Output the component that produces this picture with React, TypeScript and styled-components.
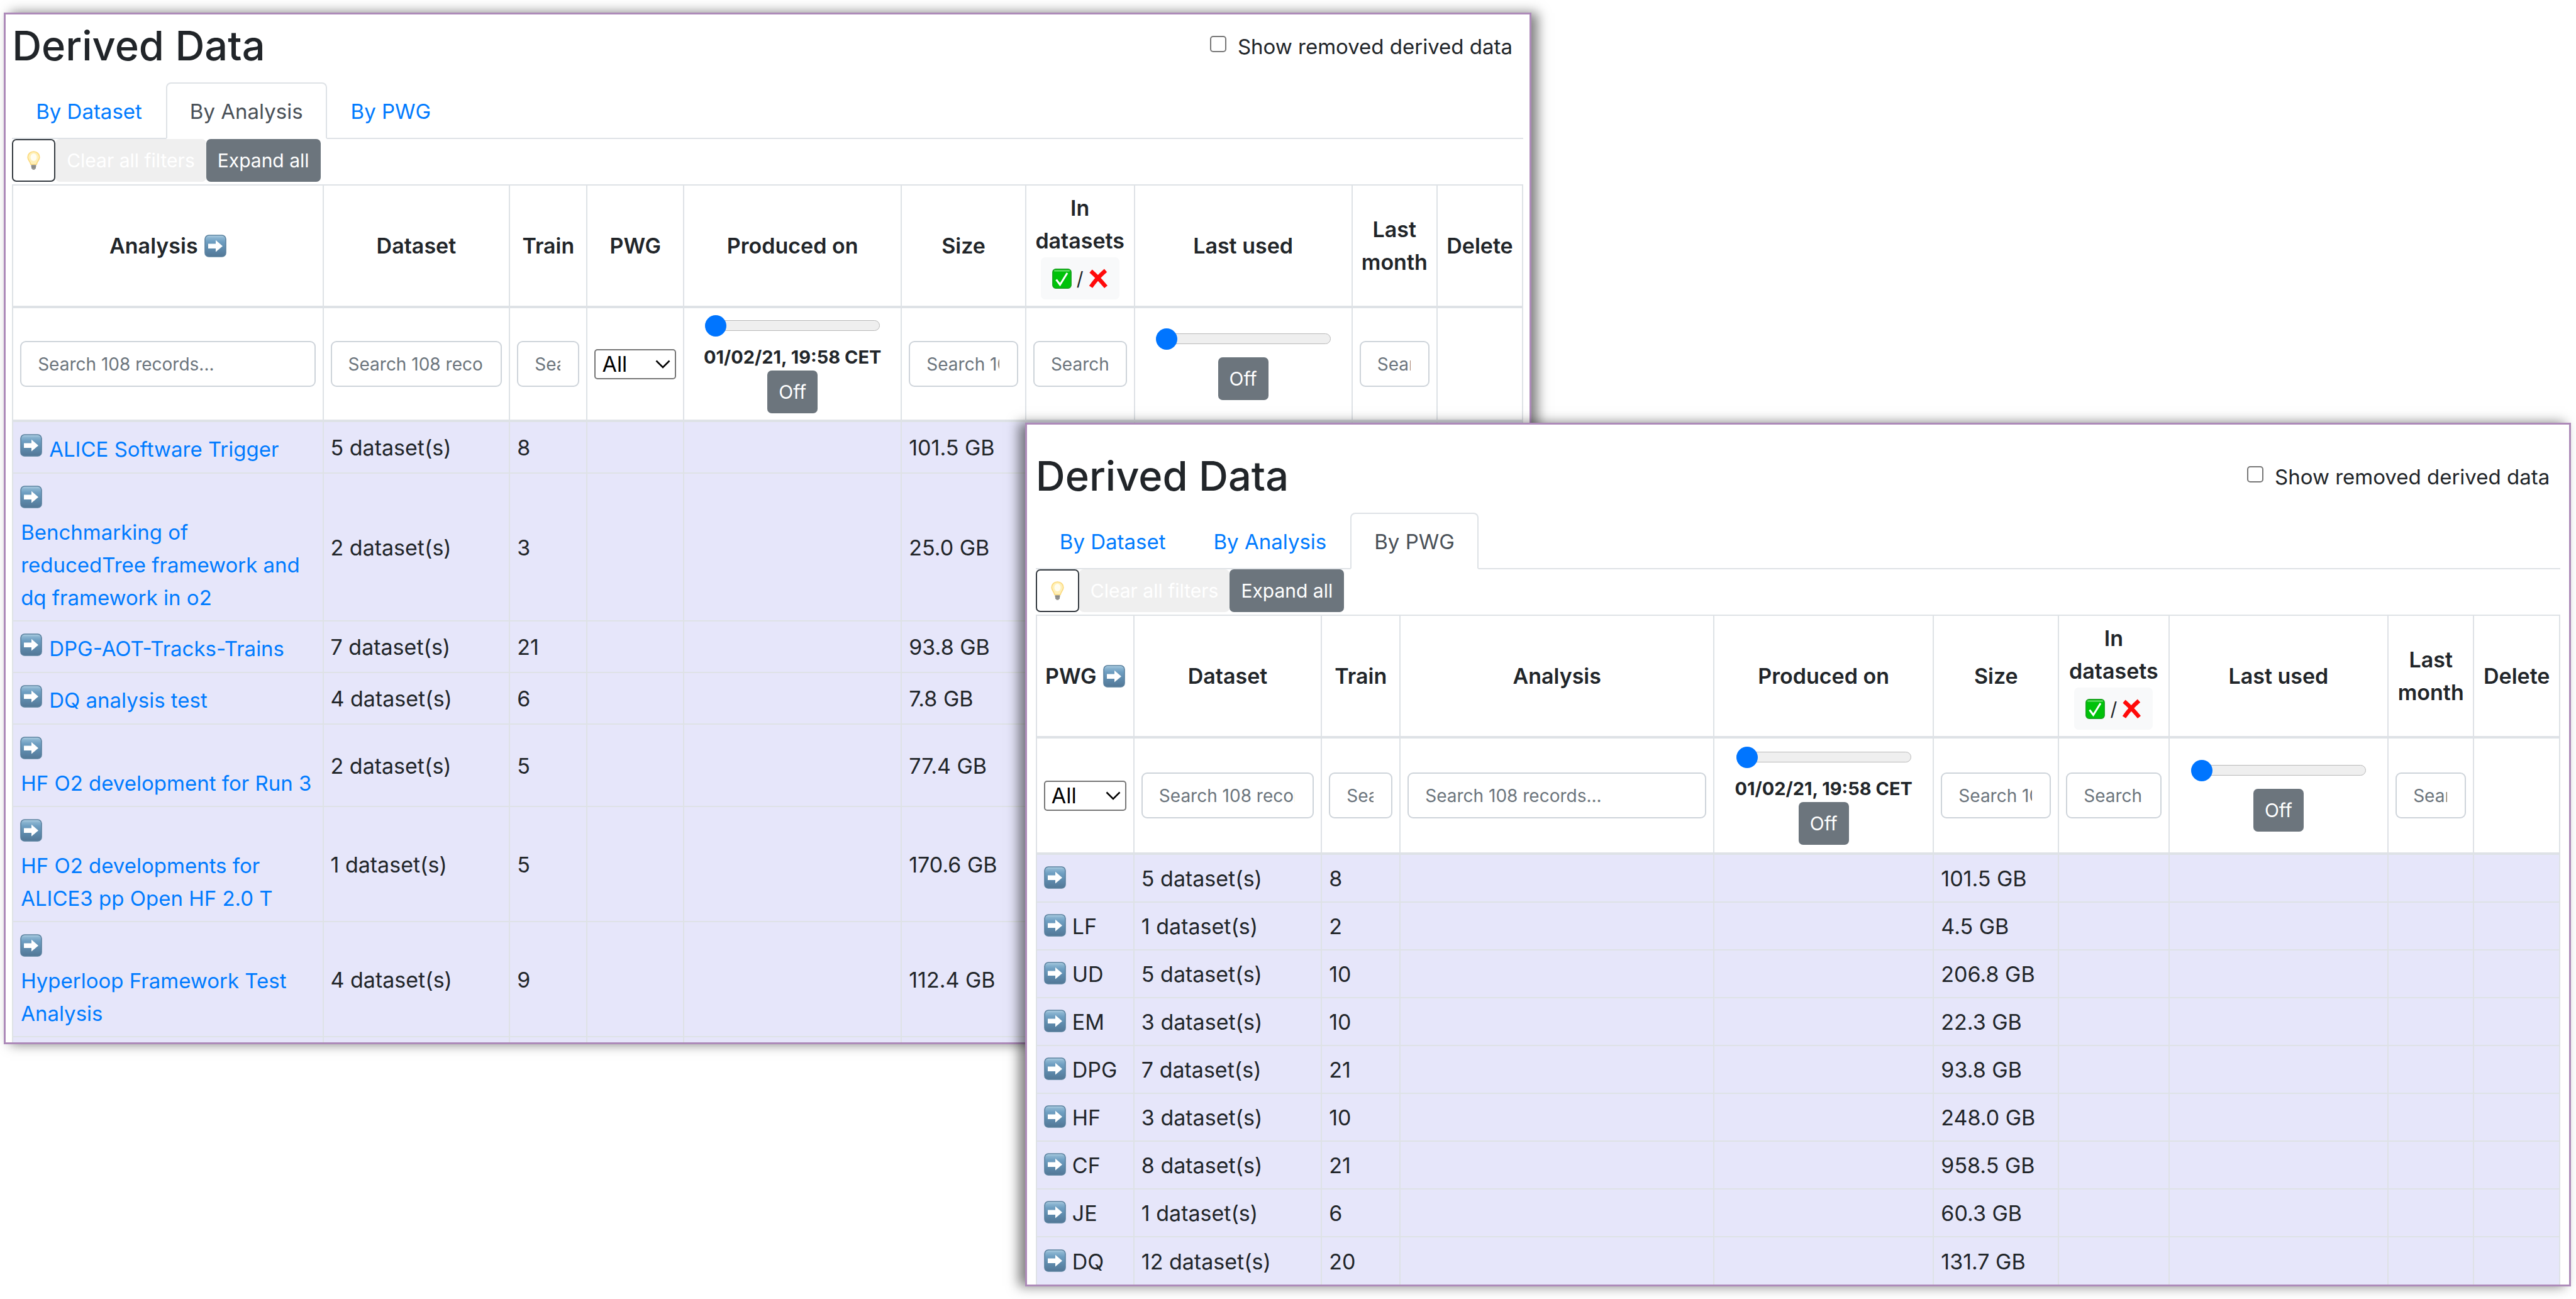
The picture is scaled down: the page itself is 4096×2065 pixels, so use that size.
import React, { useId } from "react";
import styled, { createGlobalStyle } from "styled-components";

const GlobalStyle = createGlobalStyle`
  *, *::before, *::after { box-sizing: border-box; }
  body {
    margin: 0;
    background: #ffffff;
    color: #212529;
    font-family: Inter, "Liberation Sans", sans-serif;
    font-size: 33px;
    line-height: 52px;
  }
  button, input, select { font-family: inherit; margin: 0; }
`;

const Desktop = styled.main`
  position: relative;
  min-height: 100vh;
  overflow: hidden;
`;

const Window = styled.section<{ $left: string; $top: string; $width: string; $inset: number; $head: number; $shade: number }>`
  position: absolute;
  left: ${(p) => p.$left};
  top: ${(p) => p.$top};
  width: ${(p) => p.$width};
  padding: ${(p) => p.$head}px ${(p) => p.$inset}px 0;
  border: 3px solid #ad8ab9;
  background: #ffffff;
  box-shadow: ${(p) => p.$shade}px 0 18px rgba(0, 0, 0, 0.5);
`;

const TitleBar = styled.header`
  display: flex;
  align-items: center;
  justify-content: space-between;
  margin-bottom: 16px;
  padding-right: 17px;
`;

const Title = styled.h2`
  margin: 0;
  font-size: 65px;
  line-height: 84px;
  font-weight: 500;
`;

const CheckLabel = styled.label`
  display: flex;
  align-items: center;
  gap: 18px;
  padding-top: 2px;
`;

const Checkbox = styled.input`
  appearance: none;
  width: 26px;
  height: 26px;
  margin-bottom: 8px;
  border: 2px solid #767676;
  border-radius: 5px;
  background: #ffffff;
`;

const Tabs = styled.nav`
  display: flex;
  border-bottom: 2px solid #dee2e6;
`;

const Tab = styled.a<{ $active: boolean }>`
  padding: 18px 36px 16px;
  margin-bottom: -2px;
  border: 2px solid ${(p) => (p.$active ? "#dee2e6" : "transparent")};
  border-bottom-color: ${(p) => (p.$active ? "#ffffff" : "transparent")};
  border-radius: 8px 8px 0 0;
  background: ${(p) => (p.$active ? "#ffffff" : "transparent")};
  color: ${(p) => (p.$active ? "#495057" : "#007bff")};
  text-decoration: none;
`;

const Toolbar = styled.div`
  display: flex;
  margin-bottom: 4px;
`;

const Button = styled.button<{ $kind: "outline" | "muted" | "solid" | "light" }>`
  height: ${(p) => (p.$kind === "light" ? 67 : 68)}px;
  padding: 0 ${(p) => (p.$kind === "outline" ? 22 : 16)}px;
  border: 2px solid ${(p) => ({ outline: "#343a40", muted: "#efefef", solid: "#6c757d", light: "#f8f9fa" })[p.$kind]};
  border-radius: 7px;
  background: ${(p) => ({ outline: "#ffffff", muted: "#efefef", solid: "#6c757d", light: "#f8f9fa" })[p.$kind]};
  color: ${(p) => (p.$kind === "light" ? "#212529" : "#ffffff")};
  font-size: 30px;
  line-height: 44px;
  display: inline-flex;
  align-items: center;
  justify-content: center;
  gap: 8px;
`;

const Table = styled.table`
  width: 100%;
  table-layout: fixed;
  border-collapse: collapse;
`;

const Col = styled.col<{ $share: number }>`
  width: ${(p) => p.$share}%;
`;

const HeadCell = styled.th`
  padding: 10px 8px;
  border: 2px solid #dee2e6;
  border-bottom-width: 4px;
  font-size: 34px;
  font-weight: 600;
  text-align: center;
  vertical-align: middle;
`;

const HeadLabel = styled.span`
  display: inline-flex;
  align-items: center;
  gap: 10px;
`;

const FilterRow = styled.tr<{ $height: number }>`
  height: ${(p) => p.$height}px;
`;

const FilterCell = styled.td`
  padding: 0 11px;
  border: 2px solid #dee2e6;
  border-bottom-width: 4px;
  vertical-align: middle;
`;

const SearchBox = styled.input`
  display: block;
  width: 100%;
  height: 73px;
  padding: 0 28px 0 26px;
  border: 2px solid #ced4da;
  border-radius: 9px;
  background: #ffffff;
  font-size: 28px;
  &::placeholder { color: #6c757d; opacity: 1; }
`;

const SelectWrap = styled.div`
  position: relative;
  svg {
    position: absolute;
    right: 9px;
    top: 17px;
    pointer-events: none;
  }
`;

const Select = styled.select`
  appearance: none;
  display: block;
  width: 100%;
  height: 48px;
  padding: 0 10px;
  border: 2px solid #767676;
  border-radius: 5px;
  background: #ffffff;
  color: #000000;
  font-size: 34px;
  line-height: 44px;
`;

const DateFilter = styled.div`
  display: flex;
  flex-direction: column;
  align-items: center;
`;

const Range = styled.input`
  appearance: none;
  width: 278px;
  height: 34px;
  margin-bottom: 12px;
  background: transparent;
  &::-webkit-slider-runnable-track {
    height: 17px;
    border: 1px solid #b9b9b9;
    border-radius: 9px;
    background: #efefef;
  }
  &::-webkit-slider-thumb {
    appearance: none;
    width: 34px;
    height: 34px;
    margin: -9px 0 0 -1px;
    border-radius: 50%;
    background: #0075ff;
  }
`;

const DateText = styled.output`
  font-size: 29px;
  line-height: 42px;
  font-weight: 700;
  white-space: nowrap;
`;

const Cell = styled.td<{ $last: boolean }>`
  height: 76px;
  padding: 12px 11px 10px;
  border: 2px solid #dee2e6;
  border-bottom-width: ${(p) => (p.$last ? 0 : 2)}px;
  background: #e6e6fa;
  font-size: 34px;
`;

const NameLine = styled.div`
  display: flex;
  align-items: center;
  gap: 10px;
  height: 52px;
  svg { margin-bottom: 4px; }
`;

const LinkLine = styled.div<{ $wrapped: boolean }>`
  display: flex;
  flex-direction: ${(p) => (p.$wrapped ? "column" : "row")};
  align-items: flex-start;
  gap: ${(p) => (p.$wrapped ? 12 : 10)}px;
  padding: ${(p) => (p.$wrapped ? "7px 0 0" : "5px 0 1px")};
  svg { margin-top: ${(p) => (p.$wrapped ? 0 : 2)}px; }
`;

const AnalysisLink = styled.a`
  padding-left: 1px;
  color: #007bff;
  font-size: 33px;
  text-decoration: none;
`;

const ClippedCell = styled.td`
  height: 9px;
  padding: 0;
  border: 2px solid #dee2e6;
  border-bottom: 0;
  background: #e6e6fa;
`;

function ArrowIcon() {
  const id = useId();
  return (
    <svg width="35" height="36" viewBox="0 0 35 36" aria-hidden="true">
      <defs>
        <linearGradient id={id} x1="0" y1="0" x2="0" y2="1">
          <stop offset="0" stopColor="#b4d3e6" />
          <stop offset="0.12" stopColor="#8ab4d0" />
          <stop offset="0.3" stopColor="#6f9fc2" />
          <stop offset="0.6" stopColor="#5f8cae" />
          <stop offset="1" stopColor="#527796" />
        </linearGradient>
      </defs>
      <rect x="1" y="1" width="33" height="34" rx="6" fill={`url(#${id})`} stroke="#5a819f" strokeWidth="1.6" />
      <path d="M6 14.5h12V8.8L29 18.2 18 27.6v-5.7H6z" fill="#ffffff" />
    </svg>
  );
}

function BulbIcon() {
  return (
    <svg width="21" height="31" viewBox="0 0 21 31" aria-hidden="true">
      <path d="M10.5 1C5 1 1.2 4.9 1.2 10c0 4.5 3.8 6.5 4.8 11.5h9c1-5 4.8-7 4.8-11.5C19.8 4.9 16 1 10.5 1z" fill="#fff0b8" stroke="#fbd97c" strokeWidth="1.6" />
      <ellipse cx="10.5" cy="10" rx="5" ry="6" fill="#fffdf0" />
      <path d="M6.5 22h8l-.6 5.5-2 2.500h-2.800l-2-2.500z" fill="#a3a39f" />
      <path d="M6.700 24.200h7.600M7 26.800h7" stroke="#6f6f6c" strokeWidth="1" />
    </svg>
  );
}

function CheckIcon() {
  return (
    <svg width="31" height="32" viewBox="0 0 31 32" aria-hidden="true">
      <rect x="0.8" y="0.8" width="29.4" height="30.4" rx="5" fill="#00c20a" stroke="#1a9c20" strokeWidth="1.4" />
      <path d="M4 3.5h23" stroke="#6fe06f" strokeWidth="2" strokeLinecap="round" />
      <path d="M6.5 17.5l6 8L24 7" fill="none" stroke="#ffffff" strokeWidth="3" />
    </svg>
  );
}

function CrossIcon() {
  return (
    <svg width="31" height="32" viewBox="0 0 31 32" aria-hidden="true">
      <path d="M3.5 4c7 6 16 15.5 24 25M27 3C19 10 10 19.5 3.5 29" fill="none" stroke="#ff0a0a" strokeWidth="6.5" />
    </svg>
  );
}

function Chevron() {
  return (
    <svg width="24" height="14" viewBox="0 0 24 14" aria-hidden="true">
      <path d="M1.5 1.5L12 12 22.5 1.5" fill="none" stroke="#000000" strokeWidth="2.6" />
    </svg>
  );
}

type Filter = "search" | "pwg" | "produced" | "used" | "none";
type Column = { label: string; share: number; filter: Filter; arrow?: boolean; badge?: boolean };
type Row = { name: React.ReactNode; sets: string; train: string; size: string };

const analysisColumns: Column[] = [
  { label: "Analysis", share: 20.55, filter: "search", arrow: true },
  { label: "Dataset", share: 12.36, filter: "search" },
  { label: "Train", share: 5.13, filter: "search" },
  { label: "PWG", share: 6.4, filter: "pwg" },
  { label: "Produced on", share: 14.42, filter: "produced" },
  { label: "Size", share: 8.23, filter: "search" },
  { label: "In datasets", share: 7.19, filter: "search", badge: true },
  { label: "Last used", share: 14.42, filter: "used" },
  { label: "Last month", share: 5.63, filter: "search" },
  { label: "Delete", share: 5.67, filter: "none" },
];

const pwgColumns: Column[] = [
  { label: "PWG", share: 6.4, filter: "pwg", arrow: true },
  { label: "Dataset", share: 12.32, filter: "search" },
  { label: "Train", share: 5.16, filter: "search" },
  { label: "Analysis", share: 20.59, filter: "search" },
  { label: "Produced on", share: 14.42, filter: "produced" },
  { label: "Size", share: 8.21, filter: "search" },
  { label: "In datasets", share: 7.24, filter: "search", badge: true },
  { label: "Last used", share: 14.39, filter: "used" },
  { label: "Last month", share: 5.62, filter: "search" },
  { label: "Delete", share: 5.65, filter: "none" },
];

const analysisData: [string, boolean, string, string, string][] = [
  ["ALICE Software Trigger", false, "5", "8", "101.5 GB"],
  ["Benchmarking of reducedTree framework and dq framework in o2", true, "2", "3", "25.0 GB"],
  ["DPG-AOT-Tracks-Trains", false, "7", "21", "93.8 GB"],
  ["DQ analysis test", false, "4", "6", "7.8 GB"],
  ["HF O2 development for Run 3", true, "2", "5", "77.4 GB"],
  ["HF O2 developments for ALICE3 pp Open HF 2.0 T", true, "1", "5", "170.6 GB"],
  ["Hyperloop Framework Test Analysis", true, "4", "9", "112.4 GB"],
];

const analysisRows: Row[] = analysisData.map(([title, wrapped, sets, train, size]) => ({
  name: (
    <LinkLine $wrapped={wrapped}>
      <ArrowIcon />
      <AnalysisLink href="#">{title}</AnalysisLink>
    </LinkLine>
  ),
  sets,
  train,
  size,
}));

const pwgData: [string, string, string, string][] = [
  ["", "5", "8", "101.5 GB"],
  ["LF", "1", "2", "4.5 GB"],
  ["UD", "5", "10", "206.8 GB"],
  ["EM", "3", "10", "22.3 GB"],
  ["DPG", "7", "21", "93.8 GB"],
  ["HF", "3", "10", "248.0 GB"],
  ["CF", "8", "21", "958.5 GB"],
  ["JE", "1", "6", "60.3 GB"],
  ["DQ", "12", "20", "131.7 GB"],
];

const pwgRows: Row[] = pwgData.map(([name, sets, train, size]) => ({
  name: (
    <NameLine>
      <ArrowIcon />
      {name}
    </NameLine>
  ),
  sets,
  train,
  size,
}));

function FilterControl({ column }: { column: Column }) {
  if (column.filter === "search") {
    return <SearchBox type="text" placeholder="Search 108 records..." aria-label={column.label} />;
  }
  if (column.filter === "pwg") {
    return (
      <SelectWrap>
        <Select aria-label="PWG">
          <option>All</option>
        </Select>
        <Chevron />
      </SelectWrap>
    );
  }
  if (column.filter === "none") return null;
  return (
    <DateFilter>
      <Range type="range" min={0} max={100} defaultValue={0} aria-label={column.label} />
      {column.filter === "produced" && <DateText>01/02/21, 19:58 CET</DateText>}
      <Button $kind="solid" type="button">Off</Button>
    </DateFilter>
  );
}

function DataTable({ columns, rows, filterHeight, clipped = false }: { columns: Column[]; rows: Row[]; filterHeight: number; clipped?: boolean }) {
  const valueOf = (label: string, index: number, row: Row) => {
    if (index === 0) return row.name;
    if (label === "Dataset") return `${row.sets} dataset(s)`;
    if (label === "Train") return row.train;
    if (label === "Size") return row.size;
    return null;
  };
  return (
    <Table>
      <colgroup>
        {columns.map((c) => <Col key={c.label} $share={c.share} />)}
      </colgroup>
      <thead>
        <tr>
          {columns.map((c) => (
            <HeadCell key={c.label} scope="col">
              {c.arrow ? <HeadLabel>{c.label}<ArrowIcon /></HeadLabel> : c.label}
              {c.badge && (
                <Button $kind="light" type="button"><CheckIcon />/<CrossIcon /></Button>
              )}
            </HeadCell>
          ))}
        </tr>
        <FilterRow $height={filterHeight}>
          {columns.map((c) => <FilterCell key={c.label}><FilterControl column={c} /></FilterCell>)}
        </FilterRow>
      </thead>
      <tbody>
        {rows.map((row, r) => (
          <tr key={r}>
            {columns.map((c, i) => (
              <Cell key={c.label} $last={!clipped && r === rows.length - 1}>{valueOf(c.label, i, row)}</Cell>
            ))}
          </tr>
        ))}
        {clipped && (
          <tr>
            {columns.map((c) => <ClippedCell key={c.label} />)}
          </tr>
        )}
      </tbody>
    </Table>
  );
}

function WindowContent({ active, id, children }: { active: string; id: string; children: React.ReactNode }) {
  return (
    <>
      <TitleBar>
        <Title>Derived Data</Title>
        <CheckLabel htmlFor={id}>
          <Checkbox type="checkbox" id={id} />
          Show removed derived data
        </CheckLabel>
      </TitleBar>
      <Tabs>
        {["By Dataset", "By Analysis", "By PWG"].map((t) => (
          <Tab key={t} href="#" $active={t === active}>{t}</Tab>
        ))}
      </Tabs>
      <Toolbar>
        <Button $kind="outline" type="button" aria-label="Hints"><BulbIcon /></Button>
        <Button $kind="muted" type="button">Clear all filters</Button>
        <Button $kind="solid" type="button">Expand all</Button>
      </Toolbar>
      {children}
    </>
  );
}

export default function App() {
  return (
    <>
      <GlobalStyle />
      <Desktop>
        <Window $left="0.15%" $top="20px" $width="59.3%" $inset={10} $head={8} $shade={10}>
          <WindowContent active="By Analysis" id="removed-analysis">
            <DataTable columns={analysisColumns} rows={analysisRows} filterHeight={181} clipped />
          </WindowContent>
        </Window>
        <Window $left="39.79%" $top="672px" $width="60.02%" $inset={14} $head={40} $shade={-10}>
          <WindowContent active="By PWG" id="removed-pwg">
            <DataTable columns={pwgColumns} rows={pwgRows} filterHeight={185} />
          </WindowContent>
        </Window>
      </Desktop>
    </>
  );
}
